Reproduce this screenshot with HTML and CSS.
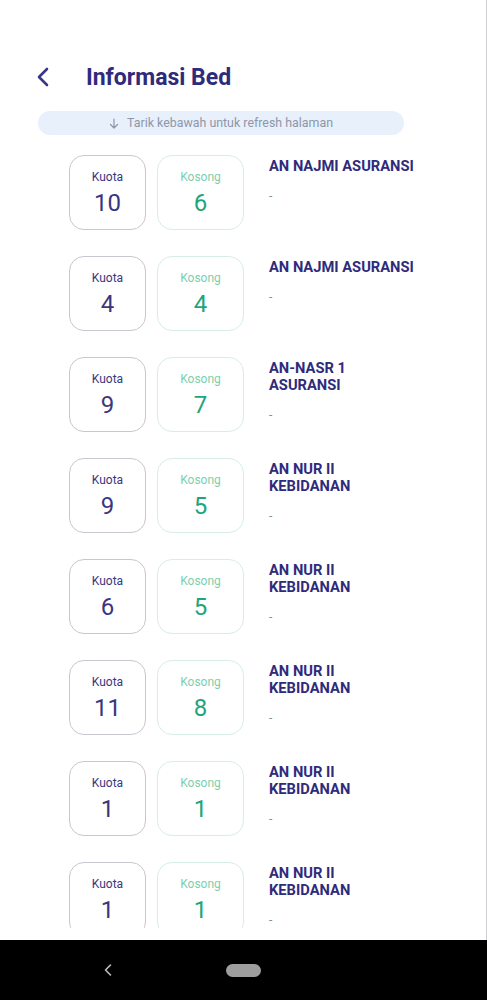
FILE: index.html
```html
<!DOCTYPE html>
<html>
<head>
<meta charset="utf-8">
<link rel="stylesheet" href="styles.css">
</head>
<body>
<div class="screen">
  <div class="app">
    <header class="header">
      <svg class="back" width="14" height="20" viewBox="0 0 14 20"><path d="M11 2 L3 10 L11 18" fill="none" stroke="#3b3786" stroke-width="2.6" stroke-linecap="round" stroke-linejoin="round"/></svg>
      <h1 class="title">Informasi Bed</h1>
    </header>
    <div class="banner"><svg class="arrow" width="10" height="11" viewBox="0 0 10 11"><path d="M5 1 V10 M1.5 6.5 L5 10 L8.5 6.5" fill="none" stroke="#8e97a9" stroke-width="1.2" stroke-linecap="round" stroke-linejoin="round"/></svg><span>Tarik kebawah untuk refresh halaman</span></div>
    <div class="list">
      <div class="row"><div class="box kuota"><span class="lbl">Kuota</span><span class="num">10</span></div><div class="box kosong"><span class="lbl">Kosong</span><span class="num">6</span></div><div class="info"><div class="name">AN NAJMI ASURANSI</div><div class="dash">-</div></div></div>
      <div class="row"><div class="box kuota"><span class="lbl">Kuota</span><span class="num">4</span></div><div class="box kosong"><span class="lbl">Kosong</span><span class="num">4</span></div><div class="info"><div class="name">AN NAJMI ASURANSI</div><div class="dash">-</div></div></div>
      <div class="row"><div class="box kuota"><span class="lbl">Kuota</span><span class="num">9</span></div><div class="box kosong"><span class="lbl">Kosong</span><span class="num">7</span></div><div class="info"><div class="name">AN-NASR 1<br>ASURANSI</div><div class="dash">-</div></div></div>
      <div class="row"><div class="box kuota"><span class="lbl">Kuota</span><span class="num">9</span></div><div class="box kosong"><span class="lbl">Kosong</span><span class="num">5</span></div><div class="info"><div class="name">AN NUR II<br>KEBIDANAN</div><div class="dash">-</div></div></div>
      <div class="row"><div class="box kuota"><span class="lbl">Kuota</span><span class="num">6</span></div><div class="box kosong"><span class="lbl">Kosong</span><span class="num">5</span></div><div class="info"><div class="name">AN NUR II<br>KEBIDANAN</div><div class="dash">-</div></div></div>
      <div class="row"><div class="box kuota"><span class="lbl">Kuota</span><span class="num">11</span></div><div class="box kosong"><span class="lbl">Kosong</span><span class="num">8</span></div><div class="info"><div class="name">AN NUR II<br>KEBIDANAN</div><div class="dash">-</div></div></div>
      <div class="row"><div class="box kuota"><span class="lbl">Kuota</span><span class="num">1</span></div><div class="box kosong"><span class="lbl">Kosong</span><span class="num">1</span></div><div class="info"><div class="name">AN NUR II<br>KEBIDANAN</div><div class="dash">-</div></div></div>
      <div class="row"><div class="box kuota"><span class="lbl">Kuota</span><span class="num">1</span></div><div class="box kosong"><span class="lbl">Kosong</span><span class="num">1</span></div><div class="info"><div class="name">AN NUR II<br>KEBIDANAN</div><div class="dash">-</div></div></div>
    </div>
  </div>
  <nav class="navbar">
    <svg class="navback" width="10" height="14" viewBox="0 0 10 14"><path d="M7.5 2 L2.5 7 L7.5 12" fill="none" stroke="#bdbdbd" stroke-width="1.6" stroke-linecap="round" stroke-linejoin="round"/></svg>
    <span class="pill"></span>
  </nav>
</div>
</body>
</html>
```

FILE: styles.css
```css
html, body {
  margin: 0;
  padding: 0;
  background: #ffffff;
}
body {
  font-family: Roboto, "Noto Sans", "Liberation Sans", sans-serif;
}
.screen {
  width: 487px;
  height: 1000px;
  display: flex;
  flex-direction: column;
  overflow: hidden;
}
.app {
  height: 940px;
  box-sizing: border-box;
  border-right: 1px solid #cfcfd2;
  background: #fff;
  display: flex;
  flex-direction: column;
}
.header {
  display: flex;
  align-items: center;
  height: 30px;
  margin-top: 62px;
  padding-left: 36px;
}
.back {
  display: block;
}
.title {
  margin: 0 0 0 36px;
  padding-top: 2px;
  font-size: 23px;
  font-weight: 700;
  color: #2f2b7b;
  line-height: 28px;
}
.banner {
  margin: 19px 0 0 38px;
  width: 366px;
  height: 24px;
  border-radius: 12px;
  background: #e7f0fb;
  color: #8e97a9;
  font-size: 12.4px;
  line-height: 24px;
  display: flex;
  align-items: center;
  justify-content: center;
  gap: 8px;
}
.arrow {
  display: block;
}
.list {
  margin-top: 20px;
  height: 773px;
  overflow: hidden;
  padding-left: 69px;
  display: flex;
  flex-direction: column;
  gap: 26px;
}
.row {
  display: flex;
  align-items: flex-start;
  flex-shrink: 0;
}
.box {
  box-sizing: border-box;
  height: 75px;
  border-radius: 15px;
  display: flex;
  flex-direction: column;
  align-items: center;
  padding-top: 14px;
  background: #fff;
}
.kuota {
  width: 77px;
  border: 1.3px solid #cbc5cf;
  color: #3a3780;
}
.kosong {
  width: 87px;
  margin-left: 11px;
  border: 1.3px solid #d7ede6;
}
.lbl {
  font-size: 12px;
  line-height: 14px;
}
.num {
  font-size: 24px;
  line-height: 28px;
  margin-top: 5px;
}
.kosong .lbl {
  color: #7ccfad;
}
.kosong .num {
  color: #1ea579;
}
.info {
  margin-left: 25px;
  padding-top: 3px;
}
.name {
  font-size: 14.7px;
  font-weight: 700;
  line-height: 17px;
  color: #2f2b7b;
}
.dash {
  margin-top: 14px;
  font-size: 12px;
  color: #8a8a8a;
  line-height: 14px;
}
.navbar {
  height: 60px;
  background: #000;
  display: flex;
  align-items: center;
  flex-shrink: 0;
}
.navback {
  margin-left: 103px;
}
.pill {
  display: block;
  width: 35px;
  height: 13px;
  border-radius: 7px;
  background: #9e9e9e;
  margin-left: 113px;
}
```
